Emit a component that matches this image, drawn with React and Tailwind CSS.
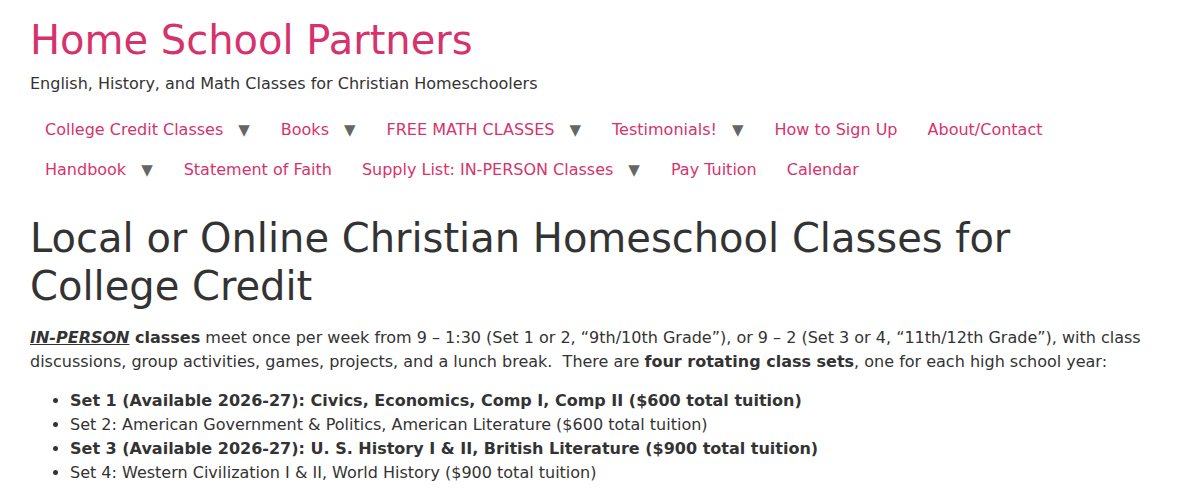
export default function App() {
  const nav1 = [
    ["College Credit Classes", true],
    ["Books", true],
    ["FREE MATH CLASSES", true],
    ["Testimonials!", true],
    ["How to Sign Up", false],
    ["About/Contact", false],
  ];
  const nav2 = [
    ["Handbook", true],
    ["Statement of Faith", false],
    ["Supply List: IN-PERSON Classes", true],
    ["Pay Tuition", false],
    ["Calendar", false],
  ];
  const NavRow = ({ items }) => (
    <ul className="flex flex-wrap">
      {items.map(([t, d]) => (
        <li key={t} className="flex items-center h-[40px] px-[15px]">
          <a className="text-[#d6336c]">{t}</a>
          {d && <span className="ml-[15px] mr-[1px] text-[#666] text-[15px]">▼</span>}
        </li>
      ))}
    </ul>
  );
  return (
    <div className="min-h-[489px] bg-white text-[#333] text-[16px] leading-[24px] px-[30px]" style={{ fontFamily: '"DejaVu Sans", sans-serif' }}>
      <div className="pt-[15px]">
        <div className="text-[40px] leading-[50px] text-[#d6336c]">Home School Partners</div>
        <div className="mt-[7px]">English, History, and Math Classes for Christian Homeschoolers</div>
      </div>
      <nav className="mt-[14px]">
        <NavRow items={nav1} />
        <NavRow items={nav2} />
      </nav>
      <h1 className="mt-[24px] text-[40px] leading-[48px]">Local or Online Christian Homeschool Classes for College Credit</h1>
      <p className="mt-[16px]">
        <strong><em className="underline">IN-PERSON</em> classes</strong> meet once per week from 9 – 1:30 (Set 1 or 2, “9th/10th Grade”), or 9 – 2 (Set 3 or 4, “11th/12th Grade”), with class discussions, group activities, games, projects, and a lunch break.&nbsp; There are <strong>four rotating class sets</strong>, one for each high school year:
      </p>
      <ul className="mt-[15px] list-disc pl-[40px]">
        <li><strong>Set 1 (Available 2026-27): Civics, Economics, Comp I, Comp II ($600 total tuition)</strong></li>
        <li>Set 2: American Government &amp; Politics, American Literature ($600 total tuition)</li>
        <li><strong>Set 3 (Available 2026-27): U. S. History I &amp; II, British Literature ($900 total tuition)</strong></li>
        <li>Set 4: Western Civilization I &amp; II, World History ($900 total tuition)</li>
      </ul>
    </div>
  );
}
